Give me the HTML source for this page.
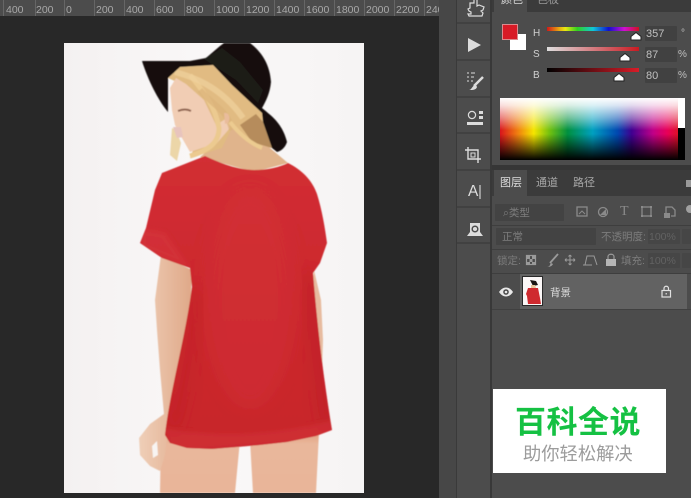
<!DOCTYPE html>
<html><head><meta charset="utf-8">
<style>
html,body{margin:0;padding:0;background:#4b4b4b}
#p{position:relative;width:691px;height:498px;overflow:hidden;background:#4c4c4c;font-family:"Liberation Sans","Noto Sans CJK SC",sans-serif;color:#bdbdbd}
.a{position:absolute}
.t{position:absolute;white-space:nowrap}
.r{position:absolute;top:3px;font-size:10.5px;color:#a8a8a8;line-height:14px}
.tk{position:absolute;top:0;width:1px;height:16px;background:#666}
.box{position:absolute;background:#414141;border-radius:1px}
.sep{position:absolute;background:#363636}
.dim{color:#7d7d7d}
#ui{position:absolute;left:0;top:0;width:691px;height:498px;filter:blur(.35px)}
</style></head><body>
<div id="p">
<div id="ui">
<!-- ruler -->
<div class="a" style="left:0;top:0;width:439px;height:16px;background:#4c4c4c"></div>
<div class="tk" style="left:3px"></div><div class="tk" style="left:35px"></div><div class="tk" style="left:64px"></div><div class="tk" style="left:94px"></div><div class="tk" style="left:124px"></div><div class="tk" style="left:154px"></div><div class="tk" style="left:184px"></div><div class="tk" style="left:214px"></div><div class="tk" style="left:244px"></div><div class="tk" style="left:274px"></div><div class="tk" style="left:304px"></div><div class="tk" style="left:334px"></div><div class="tk" style="left:364px"></div><div class="tk" style="left:394px"></div><div class="tk" style="left:424px"></div>
<span class="r" style="left:6px">400</span><span class="r" style="left:36px">200</span><span class="r" style="left:66px">0</span><span class="r" style="left:96px">200</span><span class="r" style="left:126px">400</span><span class="r" style="left:156px">600</span><span class="r" style="left:186px">800</span><span class="r" style="left:216px">1000</span><span class="r" style="left:246px">1200</span><span class="r" style="left:276px">1400</span><span class="r" style="left:306px">1600</span><span class="r" style="left:336px">1800</span><span class="r" style="left:366px">2000</span><span class="r" style="left:396px">2200</span><span class="r" style="left:426px;width:13px;overflow:hidden">240</span>
<!-- canvas -->
<div class="a" style="left:0;top:16px;width:439px;height:482px;background:#282828"></div>
<div class="a" style="left:439px;top:0;width:17px;height:498px;background:#474747"></div>
<div class="a" style="left:456px;top:0;width:1px;height:498px;background:#3a3a3a"></div>
<div class="a" style="left:490px;top:0;width:2px;height:498px;background:#383838"></div>

<!-- toolbar icons -->
<svg class="a" style="left:456px;top:0" width="36" height="250" viewBox="0 0 36 250" fill="none" stroke="#dcdcdc" stroke-width="1.300">
<path stroke="#363636" stroke-width="1" d="M1 23H34M1 60H34M1 97H34M1 133H34M1 170H34M1 207H34M1 243H34"/>
<path d="M18 0v3h-4v5l-2 1 1 2 2 1v2h-3l1 2h13l1-3-2-2 2-1 1-3-5-2-2 1V0" stroke-width="1.200"/>
<path d="M12 38l13 7-13 7z" fill="#dcdcdc" stroke="none"/>
<path d="M11 73h2M15 73h4M11 77h2M15 77h3M11 81h2M15 81h2" stroke-width="1.100"/>
<path d="M27 77L18 86" stroke-width="2.500"/><path d="M13 90c3 0 3-5 7-5l1 2c-1 3-4 3-8 3z" fill="#dcdcdc" stroke="none"/>
<circle cx="16" cy="115" r="3.600" stroke-width="1.200"/><path d="M23 111h4v3h-4zM23 116h4v3h-4z" fill="#dcdcdc" stroke="none"/><path d="M11 122h16v3H11z" fill="#dcdcdc" stroke="none"/>
<path d="M12 147v12h13M9 150h13v13" stroke-width="1.400"/><rect x="15" y="153" width="4" height="4" stroke-width="1"/>
<path d="M24 185v14" stroke-width="1.100"/>
<path d="M14 223h10v9l3 4H11l3-4z" fill="#dcdcdc" stroke="none"/><circle cx="19" cy="229" r="2.800" stroke="#4c4c4c" stroke-width="1.500"/>
</svg>
<span class="t" style="left:468px;top:183px;font-size:15.500px;line-height:18px;color:#dedede">A</span>

<!-- top panel -->
<div class="a" style="left:492px;top:0;width:199px;height:12px;background:#3b3b3b"></div>
<div class="a" style="left:494px;top:0;width:33px;height:12px;background:#4c4c4c"></div>
<span class="t" style="left:501px;top:-7px;font-size:11px;line-height:14px;color:#d5d5d5">颜色</span>
<span class="t" style="left:537px;top:-7px;font-size:11px;line-height:14px;color:#999">色板</span>

<!-- fg/bg swatches -->
<div class="a" style="left:510px;top:34px;width:16px;height:16px;background:#fff"></div>
<div class="a" style="left:502px;top:24px;width:14px;height:14px;background:#d71a26;border:1.500px solid #d98a8e"></div>

<span class="t" style="left:533px;top:27px;font-size:10px;line-height:14px;color:#d0d0d0">H</span>
<span class="t" style="left:533px;top:48px;font-size:10px;line-height:14px;color:#d0d0d0">S</span>
<span class="t" style="left:533px;top:69px;font-size:10px;line-height:14px;color:#d0d0d0">B</span>
<div class="a" style="left:547px;top:27px;width:92px;height:4px;background:linear-gradient(90deg,#d01818,#e8b010 14%,#e8e810 20%,#30d020 33%,#10c8d8 50%,#1010d0 67%,#d010d0 84%,#d01020)"></div>
<div class="a" style="left:547px;top:47px;width:92px;height:4px;background:linear-gradient(90deg,#dedede,#c91a22)"></div>
<div class="a" style="left:547px;top:68px;width:92px;height:4px;background:linear-gradient(90deg,#000,#d81c28)"></div>
<svg class="a" style="left:540px;top:30px" width="105" height="55" viewBox="0 0 105 55">
<path d="M91 6.500l5-4 5 4v3.500h-10zM80 27.500l5-4 5 4v3.500h-10zM74 47.500l5-4 5 4v3.500h-10z" fill="#fff" stroke="#222" stroke-width="1"/>
</svg>
<div class="box" style="left:645px;top:26px;width:32px;height:15px"></div>
<div class="box" style="left:645px;top:47px;width:32px;height:15px"></div>
<div class="box" style="left:645px;top:68px;width:32px;height:15px"></div>
<span class="t" style="left:646px;top:27px;font-size:11px;line-height:14px;color:#c0c0c0">357</span>
<span class="t" style="left:646px;top:48px;font-size:11px;line-height:14px;color:#c0c0c0">87</span>
<span class="t" style="left:646px;top:69px;font-size:11px;line-height:14px;color:#c0c0c0">80</span>
<span class="t" style="left:681px;top:27px;font-size:10px;line-height:14px;color:#c0c0c0">°</span>
<span class="t" style="left:678px;top:48px;font-size:10px;line-height:14px;color:#c0c0c0">%</span>
<span class="t" style="left:678px;top:69px;font-size:10px;line-height:14px;color:#c0c0c0">%</span>

<!-- spectrum -->
<div class="a" style="left:500px;top:98px;width:178px;height:62px;background:linear-gradient(180deg,#fff 0%,rgba(255,255,255,.85) 12%,rgba(255,255,255,.45) 32%,rgba(255,255,255,0) 52%),linear-gradient(180deg,rgba(0,0,0,0) 58%,#000 100%),linear-gradient(90deg,#d8141c 0%,#f08010 10%,#f5e500 19%,#70c010 28%,#009040 38%,#00a0c0 52%,#0048b0 66%,#400090 74%,#c00088 86%,#e80058 94%,#e01028 100%)"></div>
<div class="a" style="left:678px;top:98px;width:7px;height:30px;background:#fff"></div>
<div class="a" style="left:678px;top:128px;width:7px;height:32px;background:#000"></div>

<!-- layers tabs -->
<div class="sep" style="left:492px;top:165px;width:199px;height:5px"></div>
<div class="a" style="left:492px;top:170px;width:199px;height:26px;background:#3b3b3b"></div>
<div class="a" style="left:494px;top:170px;width:33px;height:26px;background:#4c4c4c"></div>
<span class="t" style="left:500px;top:176px;font-size:11px;line-height:15px;color:#dedede">图层</span>
<span class="t" style="left:536px;top:176px;font-size:11px;line-height:15px;color:#a8a8a8">通道</span>
<span class="t" style="left:573px;top:176px;font-size:11px;line-height:15px;color:#a8a8a8">路径</span>
<div class="a" style="left:686px;top:180px;width:5px;height:7px;background:#999"></div>

<!-- filter row -->
<div class="box" style="left:495px;top:204px;width:69px;height:17px;background:#434343"></div>
<span class="t dim" style="left:503px;top:206px;font-size:10.500px;line-height:14px">⌕类型</span>
<svg class="a" style="left:570px;top:200px" width="121" height="26" viewBox="0 0 121 26" fill="none" stroke="#8a8a8a" stroke-width="1.300">
<rect x="7" y="7" width="10" height="9"/><path d="M9 14l3-3 3 3" stroke-width="1"/>
<circle cx="33" cy="12" r="4.500"/><path d="M30 15l6-6v6z" fill="#8a8a8a" stroke="none"/>
<rect x="72" y="7" width="9" height="9"/><path d="M71 6h2v2h-2zM80 6h2v2h-2zM71 15h2v2h-2zM80 15h2v2h-2z" fill="#8a8a8a" stroke="none"/>
<path d="M96 15V7h6l3 3v6h-4"/><rect x="94" y="13" width="6" height="5" fill="#8a8a8a" stroke="none"/>
<circle cx="120" cy="9" r="4" fill="#a0a0a0" stroke="none"/>
</svg>
<span class="t" style="left:620px;top:204px;font-family:'Liberation Serif',serif;font-size:14px;line-height:16px;color:#8a8a8a">T</span>
<div class="sep" style="left:492px;top:225px;width:199px;height:1px;background:#3e3e3e"></div>

<!-- blend row -->
<div class="box" style="left:496px;top:228px;width:100px;height:17px;background:#434343"></div>
<span class="t dim" style="left:502px;top:230px;font-size:10.500px;line-height:14px">正常</span>
<span class="t dim" style="left:601px;top:230px;font-size:10.500px;line-height:14px">不透明度:</span>
<div class="box" style="left:648px;top:229px;width:32px;height:15px;background:#464646"></div>
<span class="t" style="left:649px;top:230px;font-size:10.500px;line-height:14px;color:#626262">100%</span>
<div class="box" style="left:682px;top:229px;width:9px;height:15px;background:#464646"></div>
<div class="sep" style="left:492px;top:249px;width:199px;height:1px;background:#3e3e3e"></div>

<!-- lock row -->
<span class="t dim" style="left:497px;top:254px;font-size:10.500px;line-height:14px">锁定:</span>
<svg class="a" style="left:525px;top:252px" width="115" height="18" viewBox="0 0 115 18" fill="none" stroke="#9a9a9a" stroke-width="1.200">
<rect x="1.500" y="3.500" width="9" height="9"/><path d="M2 4h3v3H2zM7 4h3v3H7zM4.500 7h3v3h-3zM2 10h3v3H2zM7 10h3v3H7z" fill="#9a9a9a" stroke="none"/>
<path d="M33 2L25 11" stroke-width="1.800"/><path d="M22 15c3 0 3-3 4-4l2 1c-1 2-3 3-6 3z" fill="#9a9a9a" stroke="none"/>
<path d="M40 8h10M45 3v10M40 8l1.500-1.500M40 8l1.500 1.500M50 8l-1.500-1.500M50 8l-1.500 1.500M45 3l-1.500 1.500M45 3l1.500 1.500M45 13l-1.500-1.500M45 13l1.500-1.500" stroke-width="1"/>
<path d="M60 13L62 4h7l3 9M58 13h9" stroke-width="1"/>
<rect x="81" y="7" width="10" height="7" fill="#b5b5b5" stroke="none"/><path d="M83 7V4.500c0-3 6-3 6 0V7"/>
</svg>
<span class="t dim" style="left:621px;top:254px;font-size:10.500px;line-height:14px">填充:</span>
<div class="box" style="left:648px;top:253px;width:32px;height:15px;background:#464646"></div>
<span class="t" style="left:649px;top:254px;font-size:10.500px;line-height:14px;color:#626262">100%</span>
<div class="box" style="left:682px;top:253px;width:9px;height:15px;background:#464646"></div>
<div class="sep" style="left:492px;top:273px;width:199px;height:1px;background:#3e3e3e"></div>

<!-- layer row -->
<div class="a" style="left:520px;top:274px;width:167px;height:35px;background:#626262"></div>
<div class="sep" style="left:492px;top:309px;width:199px;height:1px;background:#404040"></div>
<svg class="a" style="left:497px;top:285px" width="18" height="14" viewBox="0 0 18 14"><path d="M2 7c4-6 10-6 14 0-4 6-10 6-14 0z" fill="#e8e8e8"/><circle cx="9" cy="7" r="2.800" fill="#484848"/><circle cx="9" cy="7" r="1.300" fill="#e8e8e8"/></svg>
<svg class="a" style="left:522px;top:276px" width="21" height="30" viewBox="0 0 21 30">
<rect x=".5" y=".5" width="20" height="29" fill="#fbf7f7" stroke="#2a2a2a"/>
<path d="M8 4l6 1 2 4-5 1z" fill="#1a1514"/><path d="M9 9h4l1 3H9z" fill="#e8c49a"/>
<path d="M6 12h10l2 10 1 6H6l-1-8-1-2z" fill="#cf2a2f"/>
</svg>
<span class="t" style="left:550px;top:286px;font-size:10.500px;line-height:14px;color:#dcdcdc">背景</span>
<svg class="a" style="left:660px;top:285px" width="13" height="13" viewBox="0 0 13 13" fill="none" stroke="#e0e0e0" stroke-width="1.200"><rect x="2" y="5.500" width="8.500" height="6.500"/><path d="M4 5.500V3.500c0-3 4.500-3 4.500 0v2"/><path d="M6.200 8v1.500"/></svg>
</div>

<!-- photo -->
<svg class="a" style="left:0;top:0" width="439" height="498" viewBox="0 0 439 498">
<defs>
<linearGradient id="sh" x1="0" y1="0" x2="0" y2="1"><stop offset="0" stop-color="#d22e34"/><stop offset=".5" stop-color="#cc282d"/><stop offset="1" stop-color="#c8262a"/></linearGradient>
<linearGradient id="bg" x1="0" y1="0" x2="1" y2="0"><stop offset="0" stop-color="#f4f1f1"/><stop offset=".5" stop-color="#faf8f8"/><stop offset="1" stop-color="#f6f4f4"/></linearGradient>
<linearGradient id="sk" x1="0" y1="0" x2="1" y2="0"><stop offset="0" stop-color="#efcfb8"/><stop offset="1" stop-color="#dfa888"/></linearGradient>
<linearGradient id="lg" x1="0" y1="0" x2="0" y2="1"><stop offset="0" stop-color="#e09f80"/><stop offset=".2" stop-color="#e9b79b"/><stop offset="1" stop-color="#e9b599"/></linearGradient>
<filter id="b" x="-5%" y="-5%" width="110%" height="110%"><feGaussianBlur stdDeviation=".6"/></filter>
<filter id="s" x="-30%" y="-30%" width="160%" height="160%"><feGaussianBlur stdDeviation="8"/></filter>
<filter id="s2" x="-20%" y="-20%" width="140%" height="140%"><feGaussianBlur stdDeviation="2"/></filter>
<clipPath id="c"><rect x="64" y="43" width="300" height="450"/></clipPath>
<clipPath id="sc"><path d="M205 156C220 163 238 170 254 170C268 170 280 167 288 163C302 170 312 180 317 194C322 210 325 228 327 243L320 263L313 273C316 310 322 370 332 430L316 436L287 442L260 445L237 447L212 449L187 448L170 443L165 435C170 390 185 340 192 287L190 268L162 258L140 243L146 228L155 190L162 173Z"/></clipPath>
</defs>
<rect x="64" y="43" width="300" height="450" fill="url(#bg)"/>
<g clip-path="url(#c)" filter="url(#b)">
<!-- legs -->
<path d="M161 432L160 493H235L240 440Z" fill="url(#lg)"/>
<path d="M250 440L253 493H316L319 432Z" fill="url(#lg)"/>
<!-- left arm -->
<path d="M161 255L155 300L157 330L160 370L164 414L150 424L139 438L140 455L150 466L160 471L165 455L167 440L174 400L190 320L192 270Z" fill="url(#sk)"/>
<path d="M152 446l5-5 1 14-5 3z" fill="#f8f4f2"/>
<!-- right arm -->
<path d="M314 270L321 300L323 340L321 400L318 380L310 300Z" fill="#e7bb9f"/>
<!-- neck -->
<path d="M200 157L217 143L230 118L262 125L270 148L288 163L254 172Z" fill="#e0b48c"/>
<!-- hair mass -->
<path d="M168 78L180 67L213 65L232 85L262 113L263 122L272 148L250 142L232 128L222 148L190 158L205 120L190 88Z" fill="#e1bb82"/>
<path d="M240 125L256 114L263 122L272 148L252 142Z" fill="#b68c5c"/>
<path d="M172 128L170 155L177 161L181 143L176 130Z" fill="#ecd6a8"/>
<!-- face -->
<path d="M170 88L176 78L186 84L204 100L216 125L227 118L230 128L217 143L190 152L182 138L175 125L172 110Z" fill="#f1cdb4"/>
<path d="M173 127h8l2 10-6 1z" fill="#e8c4bd"/>
<path d="M178 111c5-2 9-2 13 0" stroke="#8f6450" stroke-width="2" fill="none"/>
<path d="M190 75C202 90 215 105 219 128C219 142 210 150 190 156" stroke="#ecca90" stroke-width="5" fill="none"/>
<path d="M175 72C190 76 220 85 243 118" stroke="#efd29c" stroke-width="6" fill="none" opacity=".7"/>
<path d="M200 90C212 105 228 110 232 130" stroke="#dcb279" stroke-width="6" fill="none" opacity=".7"/>
<path d="M230 122C240 135 250 143 262 148" stroke="#eccb90" stroke-width="4" fill="none"/>
<path d="M224 113c5-1 7 5 4 10l-3 1z" fill="#e9bc9b"/>
<!-- shirt -->
<path d="M205 156C220 163 238 170 254 170C268 170 280 167 288 163C302 170 312 180 317 194C322 210 325 228 327 243L320 263L313 273C316 310 322 370 332 430L316 436L287 442L260 445L237 447L212 449L187 448L170 443L165 435C170 390 185 340 192 287L190 268L162 258L140 243L146 228L155 190L162 173Z" fill="url(#sh)"/>
<g clip-path="url(#sc)">
<ellipse cx="250" cy="300" rx="45" ry="110" fill="#d4343a" opacity=".4" filter="url(#s)"/>
<path d="M196 290C192 340 185 390 172 430" stroke="#ae1f24" stroke-width="10" fill="none" opacity=".3" filter="url(#s)"/>
<path d="M308 275C314 320 320 380 328 425" stroke="#a81e22" stroke-width="10" fill="none" opacity=".35" filter="url(#s)"/>
<path d="M165 428C220 438 280 434 332 420L334 440L170 452Z" fill="#d63b3f" opacity=".4" filter="url(#s2)"/>
<path d="M140 228L165 232L190 268L140 248Z" fill="#d6363c" opacity=".6" filter="url(#s2)"/>
</g>
<!-- hat -->
<path d="M142 61L190 61L206 58L220 46L224 43H250C262 52 270 65 271 82C270 93 266 101 262 108C270 115 282 122 287 142C285 148 281 151 277 152L272 148L263 122L262 113L232 85L213 65L180 67L168 78L168 112C158 100 148 80 142 61Z" fill="#14110e"/>
<path d="M204 59L222 48L240 62L263 90L258 103L236 80Z" fill="#1e1a17"/>
</g>
</svg>

<!-- watermark -->
<div class="a" style="left:493px;top:389px;width:173px;height:84px;background:#fff"></div>
<span class="t" style="left:515px;top:405px;font-size:31px;line-height:36px;font-weight:700;letter-spacing:.5px;color:#15c143">百科全说</span>
<span class="t" style="left:523px;top:442px;font-size:18.300px;line-height:23px;color:#9c9c9c">助你轻松解决</span>
</div>
</body></html>
